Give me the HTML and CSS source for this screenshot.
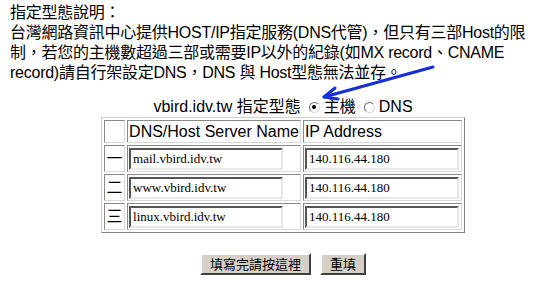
FILE: index.html
```html
<!DOCTYPE html>
<html lang="zh-Hant">
<head>
  <meta charset="UTF-8">
  <title>指定型態</title>
  <link rel="stylesheet" href="styles.css">
</head>
<body>
  <div class="page">
    <p class="note">指定型態說明：<br>台灣網路資訊中心提供HOST/IP指定服務(DNS代管)，但只有三部Host的限<br>制，若您的主機數超過三部或需要IP以外的紀錄(如MX record、CNAME<br>record)請自行架設定DNS，DNS 與 Host型態無法並存。</p>

    <form class="form">
      <div class="type-row">
        vbird.idv.tw 指定型態
        <label><input type="radio" name="type" checked> 主機</label>
        <label><input type="radio" name="type"> DNS</label>
      </div>

      <table class="hosts">
        <tr class="head">
          <td class="no"></td>
          <td class="name">DNS/Host Server Name</td>
          <td class="ip">IP Address</td>
        </tr>
        <tr>
          <td class="no">一</td>
          <td class="name"><input value="mail.vbird.idv.tw"></td>
          <td class="ip"><input value="140.116.44.180"></td>
        </tr>
        <tr>
          <td class="no">二</td>
          <td class="name"><input value="www.vbird.idv.tw"></td>
          <td class="ip"><input value="140.116.44.180"></td>
        </tr>
        <tr>
          <td class="no">三</td>
          <td class="name"><input value="linux.vbird.idv.tw"></td>
          <td class="ip"><input value="140.116.44.180"></td>
        </tr>
      </table>

      <div class="actions">
        <button type="submit">填寫完請按這裡</button>
        <button type="reset">重填</button>
      </div>
    </form>

    <svg class="arrow" width="548" height="283" viewBox="0 0 548 283">
      <line x1="433" y1="67" x2="324" y2="97" stroke="#1530d8" stroke-width="3" stroke-linecap="round"/>
      <polyline points="335,88 324,97 338,99" fill="none" stroke="#1530d8" stroke-width="3" stroke-linecap="round" stroke-linejoin="round"/>
    </svg>
  </div>
</body>
</html>
```

FILE: styles.css
```css
body {
  margin: 0;
  font-family: 'Liberation Sans', 'Noto Sans CJK TC', sans-serif;
  font-size: 16px;
  color: #000;
  background: #fff;
}
.page {
  position: relative;
  width: 548px;
  height: 283px;
  overflow: hidden;
}
.note {
  margin: 0;
  padding: 3px 0 0 10px;
  line-height: 20px;
  letter-spacing: -0.25px;
  white-space: nowrap;
}
.form {
  margin: 0;
  padding-left: 18px;
  display: flex;
  flex-direction: column;
  align-items: center;
}
.type-row {
  margin-top: 14px;
  line-height: 20px;
  display: flex;
  align-items: center;
  gap: 4px;
}
.type-row label {
  display: flex;
  align-items: center;
  gap: 2px;
}
.type-row input {
  appearance: none;
  -webkit-appearance: none;
  box-sizing: border-box;
  width: 11px;
  height: 11px;
  margin: 0 2px 0 4px;
  border: 1px solid;
  border-color: #707070 #d8d8d8 #d8d8d8 #707070;
  border-radius: 50%;
  background: #fff;
  position: relative;
}
.type-row input:checked::after {
  content: "";
  position: absolute;
  left: 2.5px;
  top: 2.5px;
  width: 4px;
  height: 4px;
  border-radius: 50%;
  background: #000;
}
.hosts {
  border-collapse: separate;
  border-spacing: 2px;
  border: 1px solid;
  border-color: #d0d0d0 #808080 #808080 #d0d0d0;
}
.hosts td {
  border: 1px solid;
  border-color: #8a8a8a #d8d8d8 #d8d8d8 #8a8a8a;
  padding: 0 1px;
  line-height: 20px;
  white-space: nowrap;
}
.hosts .head td {
  height: 21px;
}
.hosts tr td {
  height: 25px;
}
.hosts .no {
  width: 17px;
  text-align: center;
}
.hosts .name {
  width: 167px;
}
.hosts .ip {
  width: 155px;
}
.hosts input {
  box-sizing: border-box;
  width: 154px;
  height: 22px;
  margin: 0;
  padding: 0 2px;
  border: 2px solid;
  border-color: #555 #e8e8e8 #e8e8e8 #555;
  font-family: 'Liberation Serif', 'Noto Sans CJK TC', serif;
  font-size: 13px;
  color: #000;
  vertical-align: middle;
}
.actions {
  margin-top: 20px;
  display: flex;
  gap: 9px;
}
.actions button {
  height: 22px;
  padding: 0 8px;
  background: #d4d0c8;
  border: 2px solid;
  border-color: #fff #404040 #404040 #fff;
  font-family: 'Noto Sans CJK TC', sans-serif;
  font-size: 13px;
  line-height: 16px;
  color: #000;
}
.arrow {
  position: absolute;
  left: 0;
  top: 0;
  pointer-events: none;
}
```
